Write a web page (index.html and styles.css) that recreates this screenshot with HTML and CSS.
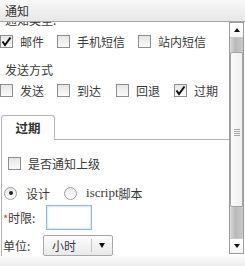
FILE: index.html
```html
<!DOCTYPE html>
<html>
<head>
<meta charset="utf-8">
<link rel="stylesheet" href="styles.css">
</head>
<body>
<div class="win">
  <div class="title">通知</div>
  <div class="body">
    <div class="viewport">
      <div class="content">
        <div class="line">通知类型:</div>
        <div class="row r1">
          <span class="opt"><span class="cb checked"><svg width="11" height="11" viewBox="0 0 11 11"><path d="M1.5 5.5 L4 9 L9.5 1.5" fill="none" stroke="#111" stroke-width="2"/></svg></span>邮件</span>
          <span class="opt"><span class="cb"></span>手机短信</span>
          <span class="opt"><span class="cb"></span>站内短信</span>
        </div>
        <div class="line">发送方式</div>
        <div class="row r2">
          <span class="opt"><span class="cb"></span>发送</span>
          <span class="opt"><span class="cb"></span>到达</span>
          <span class="opt"><span class="cb"></span>回退</span>
          <span class="opt"><span class="cb checked"><svg width="11" height="11" viewBox="0 0 11 11"><path d="M1.5 5.5 L4 9 L9.5 1.5" fill="none" stroke="#111" stroke-width="2"/></svg></span>过期</span>
        </div>
        <div class="tabs">
          <div class="strip"><div class="tab">过期</div><div class="rest"></div></div>
          <div class="panel">
            <div class="prow p1"><span class="opt"><span class="cb"></span>是否通知上级</span></div>
            <div class="prow p2">
              <span class="ropt"><span class="rb on"></span>设计</span>
              <span class="ropt"><span class="rb"></span><span class="serif">iscript</span>脚本</span>
            </div>
            <div class="prow p3"><span class="lbl"><span class="req">*</span>时限:</span><span class="input"></span></div>
            <div class="prow p4"><span class="lbl">单位:</span><span class="select"><span class="sv">小时</span><span class="sep"></span><span class="arr"></span></span></div>
          </div>
        </div>
      </div>
    </div>
    <div class="scrollbar">
      <div class="sbtn up"><span class="tri-up"></span></div>
      <div class="track">
        <div class="thumb"><span class="grip"></span></div>
      </div>
      <div class="sbtn down"><span class="tri-down"></span></div>
    </div>
  </div>
  <div class="footer"></div>
</div>
</body>
</html>
```
FILE: styles.css
```css
html, body { margin: 0; padding: 0; background: #fff; }
body { font-family: "Noto Sans CJK SC", "Noto Sans", sans-serif; font-size: 12px; color: #3a3a3a; }
.win { width: 245px; height: 266px; display: flex; flex-direction: column; overflow: hidden; }
.title { height: 21px; line-height: 21px; padding-left: 5px; background: linear-gradient(#f8f8f8, #e7e7e7); border-bottom: 1px solid #a6a6a6; color: #333; flex: none; }
.body { height: 234px; display: flex; flex: none; }
.viewport { width: 229px; height: 234px; overflow: hidden; flex: none; }
.content { margin-top: -12px; }
.line { height: 20px; line-height: 20px; padding-left: 5px; white-space: nowrap; }
.row { height: 20px; display: flex; align-items: center; white-space: nowrap; }
.r1 { height: 22px; margin-bottom: 8px; }
.opt { display: inline-flex; align-items: center; margin-right: 13px; flex: none; white-space: nowrap; }
.cb { width: 11px; height: 11px; border: 1px solid #8e8e8e; background: linear-gradient(#e6e6e6, #fafafa); margin-right: 7px; display: inline-flex; align-items: center; justify-content: center; flex: none; }
.r2 .opt:nth-child(2) { margin-right: 15px; }
.r2 .opt:nth-child(3) { margin-right: 14px; }
.r2 .opt:nth-child(4) { margin-right: 0; }
.tabs { margin-top: 15px; margin-left: 1px; }
.strip { display: flex; height: 25px; }
.tab { width: 52px; height: 24px; border: 1px solid #b5b5b5; border-bottom: none; border-radius: 3px 3px 0 0; background: #fff; font-weight: bold; line-height: 23px; text-align: center; color: #333; font-size: 12.5px; flex: none; }
.rest { flex: 1; border-bottom: 1px solid #b5b5b5; }
.panel { border-left: 1px solid #b5b5b5; height: 200px; padding-top: 13px; }
.prow { display: flex; align-items: center; white-space: nowrap; }
.p1 { height: 20px; padding-left: 6px; }
.p2 { height: 20px; margin-top: 10px; padding-left: 2px; }
.ropt { display: inline-flex; align-items: center; margin-right: 14px; flex: none; }
.rb { width: 11px; height: 11px; border: 1px solid #a0a0a0; border-radius: 50%; background: linear-gradient(#e8e8e8, #fcfcfc); margin-right: 9px; display: inline-flex; align-items: center; justify-content: center; flex: none; }
.rb.on::after { content: ""; width: 4px; height: 4px; border-radius: 50%; background: #222; }
.serif { font-family: "Liberation Serif", serif; font-size: 13px; }
.p3 { height: 27px; margin-top: 1px; padding-left: 1px; }
.lbl { width: 42px; display: inline-flex; align-items: center; flex: none; }
.req { color: #d33; font-size: 11px; width: 5px; }
.input { width: 44px; height: 23px; border: 1px solid #8cb9e6; box-shadow: inset 0 0 2px 1px #d3e6f8; background: #fff; margin-left: 1px; flex: none; }
.p4 { height: 20px; margin-top: 4px; padding-left: 1px; }
.p4 .lbl { width: 40px; }
.select { width: 68px; height: 19px; border: 1px solid #a8a8a8; border-radius: 2px; background: linear-gradient(#fdfdfd, #e9e9e9); display: flex; align-items: center; flex: none; }
.sv { margin-left: 8px; width: 39px; }
.sep { width: 1px; height: 13px; background: #c4c4c4; }
.arr { margin-left: 7px; width: 0; height: 0; border-left: 3.5px solid transparent; border-right: 3.5px solid transparent; border-top: 5px solid #111; }
.scrollbar { width: 13px; height: 230px; border: 1px solid #9c9c9c; display: flex; flex-direction: column; background: #f2f2f2; flex: none; }
.sbtn { background: linear-gradient(#fff, #f4f4f4); display: flex; align-items: center; justify-content: center; flex: none; }
.up { border-bottom: 1px solid #c8c8c8; height: 14px; }
.down { border-top: 1px solid #c8c8c8; height: 14px; }
.tri-up { width: 0; height: 0; border-left: 3.5px solid transparent; border-right: 3.5px solid transparent; border-bottom: 4px solid #111; }
.tri-down { width: 0; height: 0; border-left: 3.5px solid transparent; border-right: 3.5px solid transparent; border-top: 4px solid #111; }
.track { flex: 1; background: linear-gradient(to right, #dcdcdc, #b9b9b9 40%, #c9c9c9); padding-top: 14px; }
.thumb { width: 11px; height: 153px; border: 1px solid #a4a4a4; border-radius: 2px; background: linear-gradient(to right, #fafafa, #efefef); display: flex; align-items: center; justify-content: center; }
.grip { width: 6px; height: 7px; background: repeating-linear-gradient(#a8a8a8 0 1px, transparent 1px 2px); margin-top: 5px; }
.footer { flex: 1; background: linear-gradient(#fdfdfd, #ececec); }
```
